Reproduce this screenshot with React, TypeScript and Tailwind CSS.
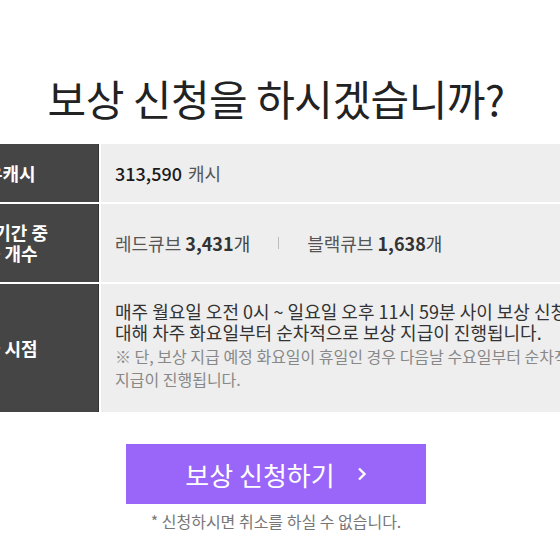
const font = { fontFamily: '"Noto Sans CJK KR", "Noto Sans", sans-serif' };

function LabelCell({ children, h }: { children: React.ReactNode; h: string }) {
  return (
    <div
      className={`w-[192px] shrink-0 bg-[#454545] border-r border-[#333] text-white font-bold text-[18px] leading-[21px] flex items-center justify-center text-center ${h}`}
    >
      {children}
    </div>
  );
}

export default function App() {
  return (
    <div className="w-[560px] h-[560px] overflow-hidden bg-white" style={font}>
      <div className="w-[738px] ml-[-93px] pt-[74px]">
        <h1 className="text-center text-[42px] leading-[48px] text-[#222] font-normal tracking-[-0.5px]">
          보상 신청을 하시겠습니까?
        </h1>

        <div className="mt-[22px] flex flex-col gap-[2px]">
          <div className="flex gap-[2px]">
            <LabelCell h="h-[58px]">보유캐시</LabelCell>
            <div className="flex-1 bg-[#eeeeee] flex items-center pl-[14px] text-[18px]">
              <span className="text-[#1a1a1a] font-medium">313,590</span>
              <span className="ml-[6px] text-[#555]">캐시</span>
            </div>
          </div>

          <div className="flex gap-[2px]">
            <LabelCell h="h-[78px]">
              신청 기간 중
              <br />
              사용 개수
            </LabelCell>
            <div className="flex-1 bg-[#eeeeee] flex items-center pl-[14px] text-[18px] text-[#555]">
              <span>
                레드큐브 <b className="text-[#333] font-bold">3,431</b>
                <span className="text-[#444]">개</span>
              </span>
              <span className="mx-[28px] w-px h-[12px] bg-[#bbb]" />
              <span>
                블랙큐브 <b className="text-[#333] font-bold">1,638</b>
                <span className="text-[#444]">개</span>
              </span>
            </div>
          </div>

          <div className="flex gap-[2px]">
            <LabelCell h="h-[128px]">지급 시점</LabelCell>
            <div className="flex-1 bg-[#eeeeee] pl-[14px] pt-[17px] whitespace-nowrap">
              <p className="text-[18px] leading-[21px] text-[#333]">
                매주 월요일 오전 0시 ~ 일요일 오후 11시 59분 사이 보상 신청한 건에
                <br />
                대해 차주 화요일부터 순차적으로 보상 지급이 진행됩니다.
              </p>
              <p className="mt-[2px] text-[16px] leading-[23px] text-[#888]">
                ※ 단, 보상 지급 예정 화요일이 휴일인 경우 다음날 수요일부터 순차적으로 보상
                <br />
                지급이 진행됩니다.
              </p>
            </div>
          </div>
        </div>

        <div className="mt-[32px] flex flex-col items-center">
          <button className="w-[300px] h-[60px] bg-[#9966f9] text-white text-[26px] flex items-center justify-center gap-[22px]">
            <span>보상 신청하기</span>
            <svg width="10" height="16" viewBox="0 0 10 16" fill="none">
              <path d="M2 2.5 L7.5 8 L2 13.5" stroke="white" strokeWidth="2.4" />
            </svg>
          </button>
          <p className="mt-[7px] text-[16px] leading-[20px] text-[#777]">* 신청하시면 취소를 하실 수 없습니다.</p>
        </div>
      </div>
    </div>
  );
}
